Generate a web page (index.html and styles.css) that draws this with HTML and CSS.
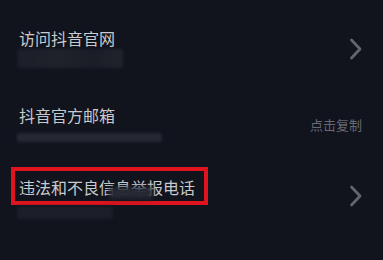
FILE: index.html
```html
<!DOCTYPE html>
<html lang="zh-CN">
<head>
<meta charset="utf-8">
<link rel="stylesheet" href="styles.css">
</head>
<body>
<div class="list">
  <div class="row row-1">
    <div class="main">
      <div class="title">访问抖音官网</div>
      <div class="blur blur-1"></div>
    </div>
    <svg class="chev" width="14" height="22" viewBox="0 0 14 22"><path d="M2.5 2 L11 11 L2.5 20" fill="none" stroke="#63656d" stroke-width="2.8" stroke-linecap="round" stroke-linejoin="round"/></svg>
  </div>
  <div class="row row-2">
    <div class="main">
      <div class="title">抖音官方邮箱</div>
      <div class="blur blur-2"></div>
    </div>
    <span class="action">点击复制</span>
  </div>
  <div class="row row-3">
    <div class="main">
      <div class="highlight"><span class="title">违法和不良信息举报电话</span><span class="smudge"></span></div>
      <div class="blur blur-3"></div>
    </div>
    <svg class="chev chev-3" width="14" height="22" viewBox="0 0 14 22"><path d="M2.5 2 L11 11 L2.5 20" fill="none" stroke="#63656d" stroke-width="2.8" stroke-linecap="round" stroke-linejoin="round"/></svg>
  </div>
</div>
</body>
</html>
```
FILE: styles.css
```css
html, body {
  margin: 0;
  padding: 0;
  background: #11131d;
  width: 383px;
  height: 260px;
  overflow: hidden;
}
body {
  font-family: "Noto Sans CJK SC", "Noto Sans", sans-serif;
  color: #c9cacd;
}
.list {
  display: flex;
  flex-direction: column;
  padding: 29px 0 0 0;
}
.row {
  display: flex;
  align-items: center;
  justify-content: space-between;
  padding: 0 20px 0 19px;
}
.main {
  display: flex;
  flex-direction: column;
  align-items: flex-start;
}
.title {
  font-size: 16px;
  line-height: 18px;
  height: 18px;
  white-space: nowrap;
  letter-spacing: 0;
}
.blur {
  background: #1e2029;
  border-radius: 2px;
  filter: blur(1.5px);
  margin-left: -2px;
}
.blur-1 {
  width: 106px;
  height: 19px;
  margin-top: 2px;
  background: linear-gradient(90deg, #1c1e28, #20222b 40%, #1b1d27 70%, #21232c);
}
.row-2 {
  margin-top: 38px;
}
.blur-2 {
  width: 145px;
  height: 9px;
  margin-top: 9px;
  background: #262832;
}
.action {
  font-size: 13px;
  line-height: 16px;
  color: #686a72;
  margin-right: 1px;
  margin-top: 1px;
}
.row-3 {
  margin-top: 25px;
}
.row-3 .main {
  margin-left: -8px;
}
.highlight {
  position: relative;
  border: 4px solid #e0141e;
  padding: 7px 9px 5px 4px;
  font-size: 16px;
  line-height: 18px;
  height: 18px;
}
.smudge {
  position: absolute;
  left: 94px;
  top: 16px;
  width: 44px;
  height: 12px;
  background: #262833;
  filter: blur(2.5px);
}
.blur-3 {
  width: 96px;
  height: 13px;
  margin-top: 1px;
  margin-left: 6px;
  background: #1c1e28;
}
.chev {
  display: block;
}
.chev-3 {
  margin-top: 6px;
}
```
